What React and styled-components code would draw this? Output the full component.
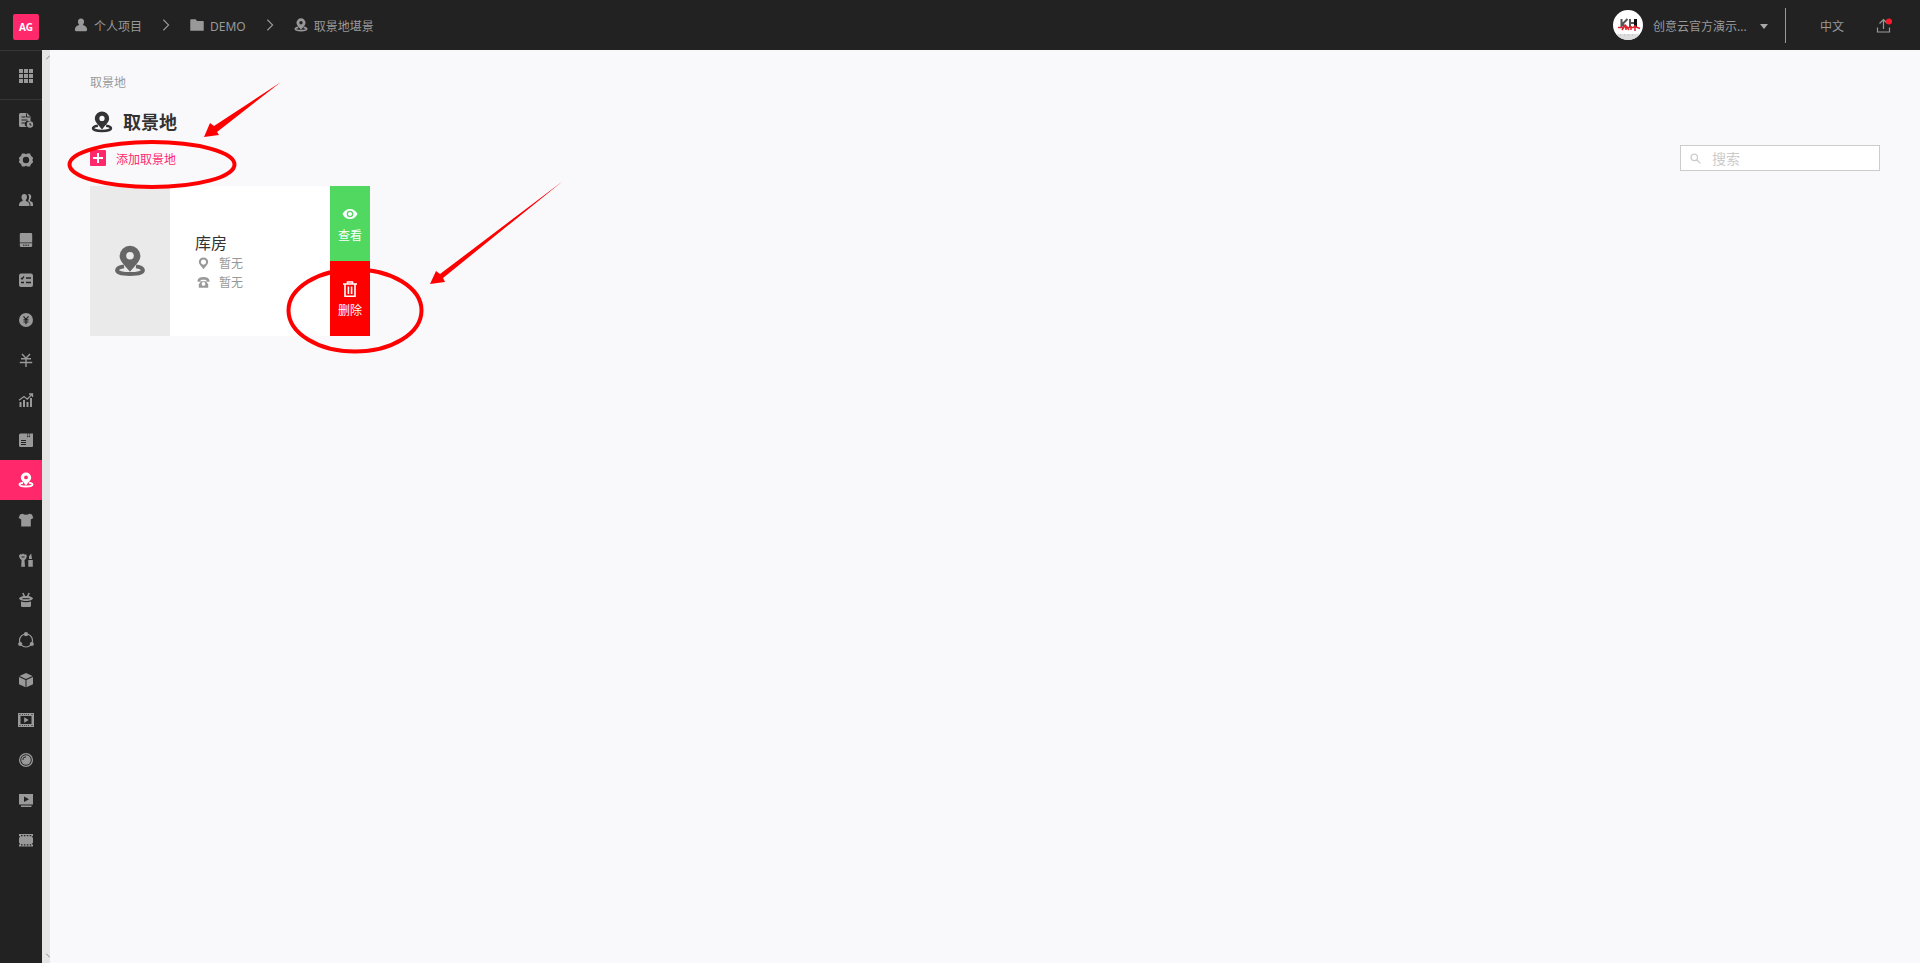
import { useState } from "react"
import styled, { createGlobalStyle, css } from "styled-components"

const GlobalStyle = createGlobalStyle`
  *,
  *::before,
  *::after {
    box-sizing: border-box;
    margin: 0;
    padding: 0;
  }

  body {
    background-color: #f9f9fc;
    color: #333;
    font-family: "Noto Sans", "Noto Sans CJK SC", sans-serif;
    font-size: 12px;
    line-height: 20px;
  }

  a {
    color: inherit;
    text-decoration: none;
  }

  button {
    border: none;
    background: none;
    color: inherit;
    font: inherit;
    cursor: pointer;
  }

  svg {
    display: block;
    flex-shrink: 0;
  }
`

const StyledApp = styled.div`
  display: flex;
  flex-direction: column;
  min-height: 100vh;
`

const Header = styled.header`
  display: flex;
  align-items: center;
  height: 50px;
  padding: 0 28px 0 13px;
  background-color: #222;
  color: #999;
`

const Logo = styled.a`
  width: 26px;
  height: 26px;
  margin-top: 4px;
  border-radius: 2px;
  background-color: #ff286b;
  color: #fff;
  font-size: 10px;
  font-weight: 700;
  line-height: 26px;
  text-align: center;
`

const Breadcrumb = styled.nav`
  display: flex;
  align-items: center;
  gap: 17px;
  margin-left: 35px;
`

const Crumb = styled.a`
  display: flex;
  align-items: center;
  gap: 6px;
`

// label beside an icon
const Label = styled.span`
  padding-top: 3px;
`

const HeaderRight = styled.div`
  display: flex;
  align-items: center;
  margin-left: auto;
`

const UserButton = styled.button`
  display: flex;
  align-items: center;
  gap: 10px;
  padding-right: 16px;
`

const UserName = styled(Label)`
  width: 96px;
  text-align: left;
  white-space: nowrap;
`

const Divider = styled.span`
  width: 1px;
  height: 35px;
  background-color: #999;
`

const LangButton = styled.button`
  margin: 0 32px 0 34px;
  padding-top: 3px;
`

const Body = styled.div`
  display: flex;
  flex: 1;
`

const Sidebar = styled.nav`
  width: 42px;
  background-color: #222;
  color: #999;
`

const SideItem = styled.a`
  display: flex;
  align-items: center;
  height: 40px;
  padding-left: 18px;

  ${(props) =>
    props.$type === "apps" &&
    css`
      height: 50px;
      padding-top: 2px;
      border-top: 1px solid #363636;
      border-bottom: 1px solid #363636;
    `}

  ${(props) =>
    props.$active &&
    css`
      background-color: #ff286b;
      color: #fff;
    `}
`

const Strip = styled.div`
  display: flex;
  flex-direction: column;
  align-items: flex-end;
  justify-content: space-between;
  width: 8px;
  padding: 5px 0;
  background-color: #e5e5e5;
`

const Main = styled.main`
  position: relative;
  flex: 1;
  padding: 23px 40px;
`

const PageLabel = styled.p`
  color: #999;
`

const TitleRow = styled.div`
  display: flex;
  align-items: center;
  gap: 10px;
  padding: 16px 0 10px 1px;
`

const Title = styled.h1`
  font-size: 18px;
  font-weight: 700;
  line-height: 26px;
`

const Toolbar = styled.div`
  display: flex;
  align-items: center;
  justify-content: space-between;
  height: 26px;
`

const AddButton = styled.button`
  display: flex;
  align-items: center;
  gap: 10px;
  color: #ff286b;
`

const SearchBox = styled.label`
  display: flex;
  align-items: center;
  gap: 10px;
  width: 200px;
  height: 26px;
  padding: 0 8px;
  border: 1px solid #ccc;
  background-color: #fff;
  color: #ccc;
`

const SearchInput = styled.input`
  width: 100%;
  padding-top: 2px;
  border: none;
  outline: none;
  background: none;
  color: #333;
  font: inherit;
  font-size: 14px;

  &::placeholder {
    color: #ccc;
  }
`

const CardList = styled.div`
  display: flex;
  flex-wrap: wrap;
  gap: 20px;
  margin-top: 15px;
`

const Card = styled.article`
  display: flex;
  width: 280px;
  height: 150px;
  background-color: #fff;
`

const Cover = styled.div`
  display: flex;
  align-items: center;
  justify-content: center;
  width: 80px;
  background-color: #eaeaea;
  color: #666;
`

const Info = styled.div`
  flex: 1;
  padding: 46px 0 0 25px;
`

const Name = styled.h2`
  font-size: 16px;
  font-weight: 400;
  line-height: 22px;
`

const InfoRow = styled.p`
  display: flex;
  align-items: center;
  gap: 9px;
  padding-left: 2px;
  color: #999;
  line-height: 19px;
`

const Actions = styled.div`
  display: flex;
  flex-direction: column;
  width: 40px;
`

const actionColors = {
  view: "#50d860",
  remove: "#ff0000",
}

const ActionButton = styled.button`
  display: flex;
  flex: 1;
  flex-direction: column;
  align-items: center;
  justify-content: center;
  gap: 4px;
  padding-top: 4px;
  background-color: ${(props) => actionColors[props.$kind]};
  color: #fff;
`

// hand-drawn marks lie over the page
const Marks = styled.svg`
  position: absolute;
  top: 0;
  left: 0;
  pointer-events: none;
`

function Icon({ size = 16, children }) {
  return (
    <svg
      width={size}
      height={size}
      viewBox="0 0 16 16"
      fill="currentColor"
      stroke="none"
      aria-hidden="true"
    >
      {children}
    </svg>
  )
}

const pin = (
  <>
    <path
      d="M5 10.700c-2 .3-3.500.9-3.500 1.900 0 1.200 3 1.900 6.500 1.900s6.500-.7 6.500-1.900c0-.9-1.500-1.600-3.500-1.900"
      fill="none"
      stroke="currentColor"
      strokeWidth="1.900"
    />
    <path
      fillRule="evenodd"
      d="M8 .4A5.200 5.200 0 0 0 2.800 5.500c0 2.300 1.900 4 5.200 7.900 3.300-3.900 5.200-5.600 5.200-7.900A5.200 5.200 0 0 0 8 .4Zm0 3.100a1.900 1.900 0 1 1 0 3.800 1.900 1.900 0 0 1 0-3.800Z"
    />
  </>
)

const icons = {
  apps: (
    <path d="M1 1h4v4H1zM6 1h4v4H6zM11 1h4v4h-4zM1 6h4v4H1zM6 6h4v4H6zM11 6h4v4h-4zM1 11h4v4H1zM6 11h4v4H6zM11 11h4v4h-4z" />
  ),
  script: (
    <>
      <path d="M2.500 1H9l3.500 3.500V9H11a3 3 0 0 0-2 6H2.500A1.500 1.500 0 0 1 1 13.500v-11A1.500 1.500 0 0 1 2.500 1Z" />
      <path d="M3.500 5h4M3.500 8h6M3.500 11h4M8.500 1.500V5H12" fill="none" stroke="#222" />
      <circle cx="12" cy="12.500" r="3.200" />
      <path d="M12 11v2h1.500" fill="none" stroke="#222" />
    </>
  ),
  gear: (
    <path
      fillRule="evenodd"
      d="M4 1.500h2.600L8 2.300l1.400-.8H12l.9 2.300L15 5.800V7l-.9 1 .9 1v1.300l-2.100 2L12 14.500H9.400L8 13.700l-1.400.8H4l-.9-2.200-2.100-2V9l.9-1L1 7V5.800l2.100-2ZM8 4.800a3.200 3.200 0 1 0 0 6.400 3.200 3.200 0 0 0 0-6.400Z"
    />
  ),
  users: (
    <>
      <path d="M10 2c2.200-.3 3.300 1 3.200 3-.1 1.300-.6 2.200-1.200 2.900v1c1.500.6 3 1.200 3 3V14h-2.500c0-3-.8-4-2.500-5 1.300-2 1.500-5 0-7Z" />
      <path d="M6.200 2C8 2 9 3.200 9 5c0 1.400-.6 2.400-1.200 3v1c2.100.8 3.700 1.500 3.700 4v1H1v-1c0-2.500 1.500-3.200 3.600-4V8C4 7.400 3.500 6.400 3.500 5c0-1.800 1-3 2.700-3Z" />
    </>
  ),
  drive: (
    <>
      <path d="M3 1h10a1.200 1.200 0 0 1 1.200 1.200V10.500H1.800V2.200A1.200 1.200 0 0 1 3 1ZM1.800 11.300h12.400v2.200A1.500 1.500 0 0 1 12.700 15H3.300a1.500 1.500 0 0 1-1.500-1.500Z" />
      <path d="M5 13.200h6" stroke="#222" strokeDasharray="1.500 .8" />
    </>
  ),
  tasks: (
    <>
      <rect x="1" y="1.500" width="14" height="13.500" rx="2" />
      <path
        d="m3 6 1 1 2-2.500M8 6h5M3 10.500h3M8 10.500h5"
        fill="none"
        stroke="#222"
        strokeWidth="1.300"
      />
    </>
  ),
  coin: (
    <>
      <circle cx="8" cy="8" r="7" />
      <path
        d="m5.500 4.300 2.500 3 2.500-3M8 7.300v5M5.500 7.800h5M5.500 10h5"
        fill="none"
        stroke="#222"
        strokeWidth="1.200"
      />
    </>
  ),
  yen: (
    <path
      d="m4 2 4 4.200L12 2M8 6v9M3 6.800h10M1.800 10.500h12.400"
      fill="none"
      stroke="currentColor"
      strokeWidth="1.400"
    />
  ),
  chart: (
    <>
      <path d="M1.500 10h2v5h-2zM5 8h2v7H5zM8.500 10h2v5h-2zM12 6h2v9h-2z" />
      <path
        d="m1 8.200 5-3.700 3.300 2.700L14 2.300M11 2h3.500v3"
        fill="none"
        stroke="currentColor"
        strokeWidth="1.300"
      />
    </>
  ),
  book: (
    <>
      <path d="M2.500 1.500H9v4l1.500-1.200L12 5.500v-4h3V14a1 1 0 0 1-1 1H2.500A1.500 1.500 0 0 1 1 13.500V3a1.500 1.500 0 0 1 1.500-1.500Z" />
      <path d="M9.500 1.500h2v3l-1-.8-1 .8Z" />
      <path d="M3 8.500h5M3 10.500h5M3 12.500h5" stroke="#222" />
    </>
  ),
  pin,
  shirt: (
    <path d="M4.500 1.800c2 1.400 5 1.400 7 0l2.500.7 1.300 3.500L12.800 7.500v7H3.200v-7L.7 6 2 2.500Z" />
  ),
  makeup: (
    <>
      <path d="M1 3.500 2.500 2l1.300.6L5 1.500l1.300 1L8 2.200l.8 1.500C8.800 6 7.700 7.300 6.500 8L7 14.800H3.200L3.600 8C2.200 7 1 5.800 1 3.500ZM11 4.200 13.200 1.500l.8 5.500h-3ZM10.300 8h4.500v6.800h-4.500z" />
      <path d="M3.500 5h3" stroke="#222" />
    </>
  ),
  hat: (
    <>
      <path
        d="m4.800 1 2 4M11.200 1l-2 4"
        fill="none"
        stroke="currentColor"
        strokeWidth="1.600"
      />
      <path d="M1 6c2.500-1.700 4-2 7-2s4.500.3 7 2c0 1.700-3 3-7 3S1 7.700 1 6ZM3 9.600c3 .7 7 .7 10 0v4.200c0 .7-.5 1.200-1.200 1.200H4.200C3.500 15 3 14.500 3 13.800Z" />
      <path d="M4.500 6.700h7" stroke="#222" />
    </>
  ),
  share: (
    <>
      <circle cx="8" cy="8.500" r="6.500" fill="none" stroke="currentColor" strokeWidth="1.200" />
      <circle cx="8" cy="2.200" r="2.100" />
      <circle cx="2.200" cy="12" r="2.100" />
      <circle cx="13.800" cy="12" r="2.100" />
    </>
  ),
  box: <path d="m8 1 6.500 2.900L8 6.900 1.500 3.900ZM1 5l6.500 3v7.200L1 12.200ZM15 5 8.500 8v7.200l6.500-3Z" />,
  player: (
    <>
      <path
        fillRule="evenodd"
        d="M0 1h16v14H0Zm2.500 3v8h11V4Zm-1-2v1h1V2Zm12 0v1h1V2Zm-12 11v1h1v-1Zm12 0v1h1v-1Z"
      />
      <path d="m6.200 5.200 4.500 2.800-4.500 2.800Z" />
      <path d="M4 2.500h8M4 13.500h8" stroke="#222" strokeDasharray="1 1" strokeWidth=".7" />
    </>
  ),
  lens: (
    <>
      <circle cx="8" cy="8" r="6.400" fill="none" stroke="currentColor" strokeWidth="1.300" />
      <circle cx="8" cy="8" r="4.800" />
      <path d="M4.800 8A3.200 3.200 0 0 1 8 4.800" fill="none" stroke="#222" />
    </>
  ),
  video: (
    <>
      <path d="M1 2h14v10.500H1zM3 13.500h10.500V15H3z" />
      <path d="m6 4.500 5 2.800-5 2.800Z" fill="#222" />
    </>
  ),
  film: (
    <>
      <path d="M1 2h14v12.500H1z" />
      <path
        d="M3 3h1.500v1.200H3zM5.900 3h1.500v1.200H5.900zM8.800 3h1.500v1.200H8.800zM11.700 3h1.500v1.200h-1.500zM3 12.300h1.500v1.200H3zM5.900 12.300h1.500v1.200H5.900zM8.800 12.300h1.500v1.200H8.800zM11.700 12.300h1.500v1.200h-1.500zM1 4h.8v1.500H1zM14.200 4h.8v1.500h-.8zM1 11h.8v1.500H1zM14.200 11h.8v1.500h-.8z"
        fill="#222"
      />
    </>
  ),
  user: (
    <path d="M8 .5c2.300 0 3.500 1.500 3.500 3.500 0 1.600-.6 3-1.500 4 2.500.5 5 2 5 5.500 0 1-.5 1.500-1.500 1.500h-11C1.500 15 1 14.500 1 13.500 1 10 3.500 8.500 6 8c-.9-1-1.500-2.400-1.500-4 0-2 1.200-3.500 3.500-3.500Z" />
  ),
  folder: <path d="M1.500 1.500h5l1.500 2h6.500A1.200 1.200 0 0 1 15.700 5v9.500H.3V2.700A1.200 1.200 0 0 1 1.500 1.500Z" />,
  chevron: (
    <path d="m5 2 6 6-6 6" fill="none" stroke="currentColor" strokeWidth="1.300" />
  ),
  upload: (
    <>
      <path
        d="m3.500 6.500 4-4 4 4M7.500 3v9M1.500 10.500V15h12v-4.500"
        fill="none"
        stroke="currentColor"
        strokeWidth="1.200"
      />
      <circle cx="13" cy="4.500" r="3" fill="#ff1a2a" />
    </>
  ),
  add: (
    <>
      <rect width="16" height="16" rx="1" />
      <path d="M8 3v10M3 8h10" stroke="#fff" strokeWidth="2" />
    </>
  ),
  search: (
    <path
      d="M6.500 2.500a4 4 0 1 0 0 8 4 4 0 0 0 0-8ZM9.500 9.500 14 14"
      fill="none"
      stroke="currentColor"
      strokeWidth="1.600"
    />
  ),
  address: (
    <path
      fillRule="evenodd"
      d="M8 .5a5.800 5.800 0 0 0-5.800 5.800C2.200 9 5 11 8 15c3-4 5.800-6 5.800-8.700A5.800 5.800 0 0 0 8 .5Zm0 2.700a3.100 3.100 0 1 1 0 6.200 3.100 3.100 0 0 1 0-6.200Z"
    />
  ),
  phone: (
    <path
      fillRule="evenodd"
      d="M.7 5.500C1 2.500 4 1.200 8 1.200s7 1.300 7.300 4.300V7h-3.800V5c-2-.7-5-.7-7 0v2H.7Zm4.500 1h5.600l3 3.500v4.500H2.200V10ZM8 7.500a2.300 2.300 0 1 0 0 4.600 2.300 2.300 0 0 0 0-4.600Z"
    />
  ),
  eye: (
    <>
      <path
        fillRule="evenodd"
        d="M8 3c3.500 0 6 2 7.500 5C14 11 11.500 13 8 13S2 11 .5 8C2 5 4.500 3 8 3Zm0 1.700a3.300 3.300 0 1 0 0 6.600 3.300 3.300 0 0 0 0-6.600Z"
      />
      <circle cx="8" cy="8" r="2" />
    </>
  ),
  trash: (
    <path
      d="M1 3h14M5.500 2.500V1h5v1.500M3 3v12.200h10V3M6.400 5.500v7.500M9.600 5.500v7.500"
      fill="none"
      stroke="currentColor"
      strokeWidth="1.600"
    />
  ),
}

const menu = [
  { icon: "script", label: "剧本" },
  { icon: "gear", label: "设置" },
  { icon: "users", label: "成员" },
  { icon: "drive", label: "硬盘" },
  { icon: "tasks", label: "任务" },
  { icon: "coin", label: "预算" },
  { icon: "yen", label: "费用" },
  { icon: "chart", label: "统计" },
  { icon: "book", label: "文档" },
  { icon: "pin", label: "取景地" },
  { icon: "shirt", label: "服装" },
  { icon: "makeup", label: "化妆" },
  { icon: "hat", label: "道具" },
  { icon: "share", label: "分享" },
  { icon: "box", label: "资产" },
  { icon: "player", label: "样片" },
  { icon: "lens", label: "镜头" },
  { icon: "video", label: "视频" },
  { icon: "film", label: "胶片" },
]

const locations = [{ id: 1, name: "库房", address: "暂无", phone: "暂无" }]

function Avatar() {
  return (
    <svg width="30" height="30" viewBox="0 0 30 30" aria-hidden="true">
      <circle cx="15" cy="15" r="15" fill="#fff" />
      <path d="M3 24h24a15 15 0 0 1-24 0Z" fill="#ddd" />
      <path
        d="M8.500 9v9M14.500 9l-5 5 4 4M17 9v8M17 13h5"
        fill="none"
        stroke="#555"
        strokeWidth="2"
      />
      <path d="M22.500 9v8" stroke="#111" strokeWidth="3" />
      <path
        d="M5 17.500h5l2-2 3 2h5l2-1 5 2M9 20l2-3M13 20v-4l3 4M18 16v4M22 15v6"
        fill="none"
        stroke="#e02430"
        strokeWidth="1.500"
      />
      <path d="M7 25h16" stroke="#bbb" strokeDasharray="1 3" />
    </svg>
  )
}

function LocationCard({ location }) {
  const { name, address, phone } = location

  return (
    <Card>
      <Cover>
        <Icon size={32}>{icons.pin}</Icon>
      </Cover>
      <Info>
        <Name>{name}</Name>
        <InfoRow>
          <Icon size={13}>{icons.address}</Icon>
          {address}
        </InfoRow>
        <InfoRow>
          <Icon size={13}>{icons.phone}</Icon>
          {phone}
        </InfoRow>
      </Info>
      <Actions>
        <ActionButton type="button" $kind="view">
          <Icon>{icons.eye}</Icon>
          查看
        </ActionButton>
        <ActionButton type="button" $kind="remove">
          <Icon>{icons.trash}</Icon>
          删除
        </ActionButton>
      </Actions>
    </Card>
  )
}

function App() {
  const [query, setQuery] = useState("")
  const shown = locations.filter((location) => location.name.includes(query))

  return (
    <>
      <GlobalStyle />
      <StyledApp>
        <Header>
          <Logo href="#">AG</Logo>
          <Breadcrumb>
            <Crumb href="#">
              <Icon size={14}>{icons.user}</Icon>
              <Label>个人项目</Label>
            </Crumb>
            <Icon size={14}>{icons.chevron}</Icon>
            <Crumb href="#">
              <Icon size={14}>{icons.folder}</Icon>
              <Label>DEMO</Label>
            </Crumb>
            <Icon size={14}>{icons.chevron}</Icon>
            <Crumb href="#">
              <Icon size={14}>{icons.pin}</Icon>
              <Label>取景地堪景</Label>
            </Crumb>
          </Breadcrumb>
          <HeaderRight>
            <UserButton type="button">
              <Avatar />
              <UserName>创意云官方演示...</UserName>
              <svg width="10" height="10" viewBox="0 0 10 10" aria-hidden="true">
                <path d="M1 4h8L5 9Z" fill="#aaa" />
              </svg>
            </UserButton>
            <Divider />
            <LangButton type="button">中文</LangButton>
            <button type="button" aria-label="上传">
              <Icon>{icons.upload}</Icon>
            </button>
          </HeaderRight>
        </Header>

        <Body>
          <Sidebar>
            <SideItem href="#" aria-label="应用" $type="apps">
              <Icon>{icons.apps}</Icon>
            </SideItem>
            {menu.map((item) => (
              <SideItem
                key={item.icon}
                href="#"
                aria-label={item.label}
                $active={item.icon === "pin"}
              >
                <Icon>{icons[item.icon]}</Icon>
              </SideItem>
            ))}
          </Sidebar>
          <Strip>
            <svg width="4" height="5" viewBox="0 0 4 5" stroke="#888">
              <path d="M0 4.500 4 .5" />
            </svg>
            <svg width="4" height="5" viewBox="0 0 4 5" stroke="#888">
              <path d="m0 .5 4 4" />
            </svg>
          </Strip>

          <Main>
            <PageLabel>取景地</PageLabel>
            <TitleRow>
              <Icon size={22}>{icons.pin}</Icon>
              <Title>取景地</Title>
            </TitleRow>
            <Toolbar>
              <AddButton type="button">
                <Icon>{icons.add}</Icon>
                <Label>添加取景地</Label>
              </AddButton>
              <SearchBox>
                <Icon size={13}>{icons.search}</Icon>
                <SearchInput
                  type="text"
                  placeholder="搜索"
                  aria-label="搜索"
                  value={query}
                  onChange={(e) => setQuery(e.target.value)}
                />
              </SearchBox>
            </Toolbar>
            <CardList>
              {shown.map((location) => (
                <LocationCard key={location.id} location={location} />
              ))}
            </CardList>

            <Marks width="520" height="310" viewBox="0 0 520 310" aria-hidden="true">
              <g fill="none" stroke="#f00" strokeWidth="4">
                <ellipse cx="102" cy="114.500" rx="82.500" ry="22.500" />
                <ellipse cx="305" cy="260.500" rx="66.500" ry="41" />
              </g>
              <g fill="#f00">
                <path d="m154 87 6-14 4 3 67-44-64 50 2 3Z" />
                <path d="m380 234 6-13 4 3L513 131 393 228l2 4Z" />
              </g>
            </Marks>
          </Main>
        </Body>
      </StyledApp>
    </>
  )
}

export default App
